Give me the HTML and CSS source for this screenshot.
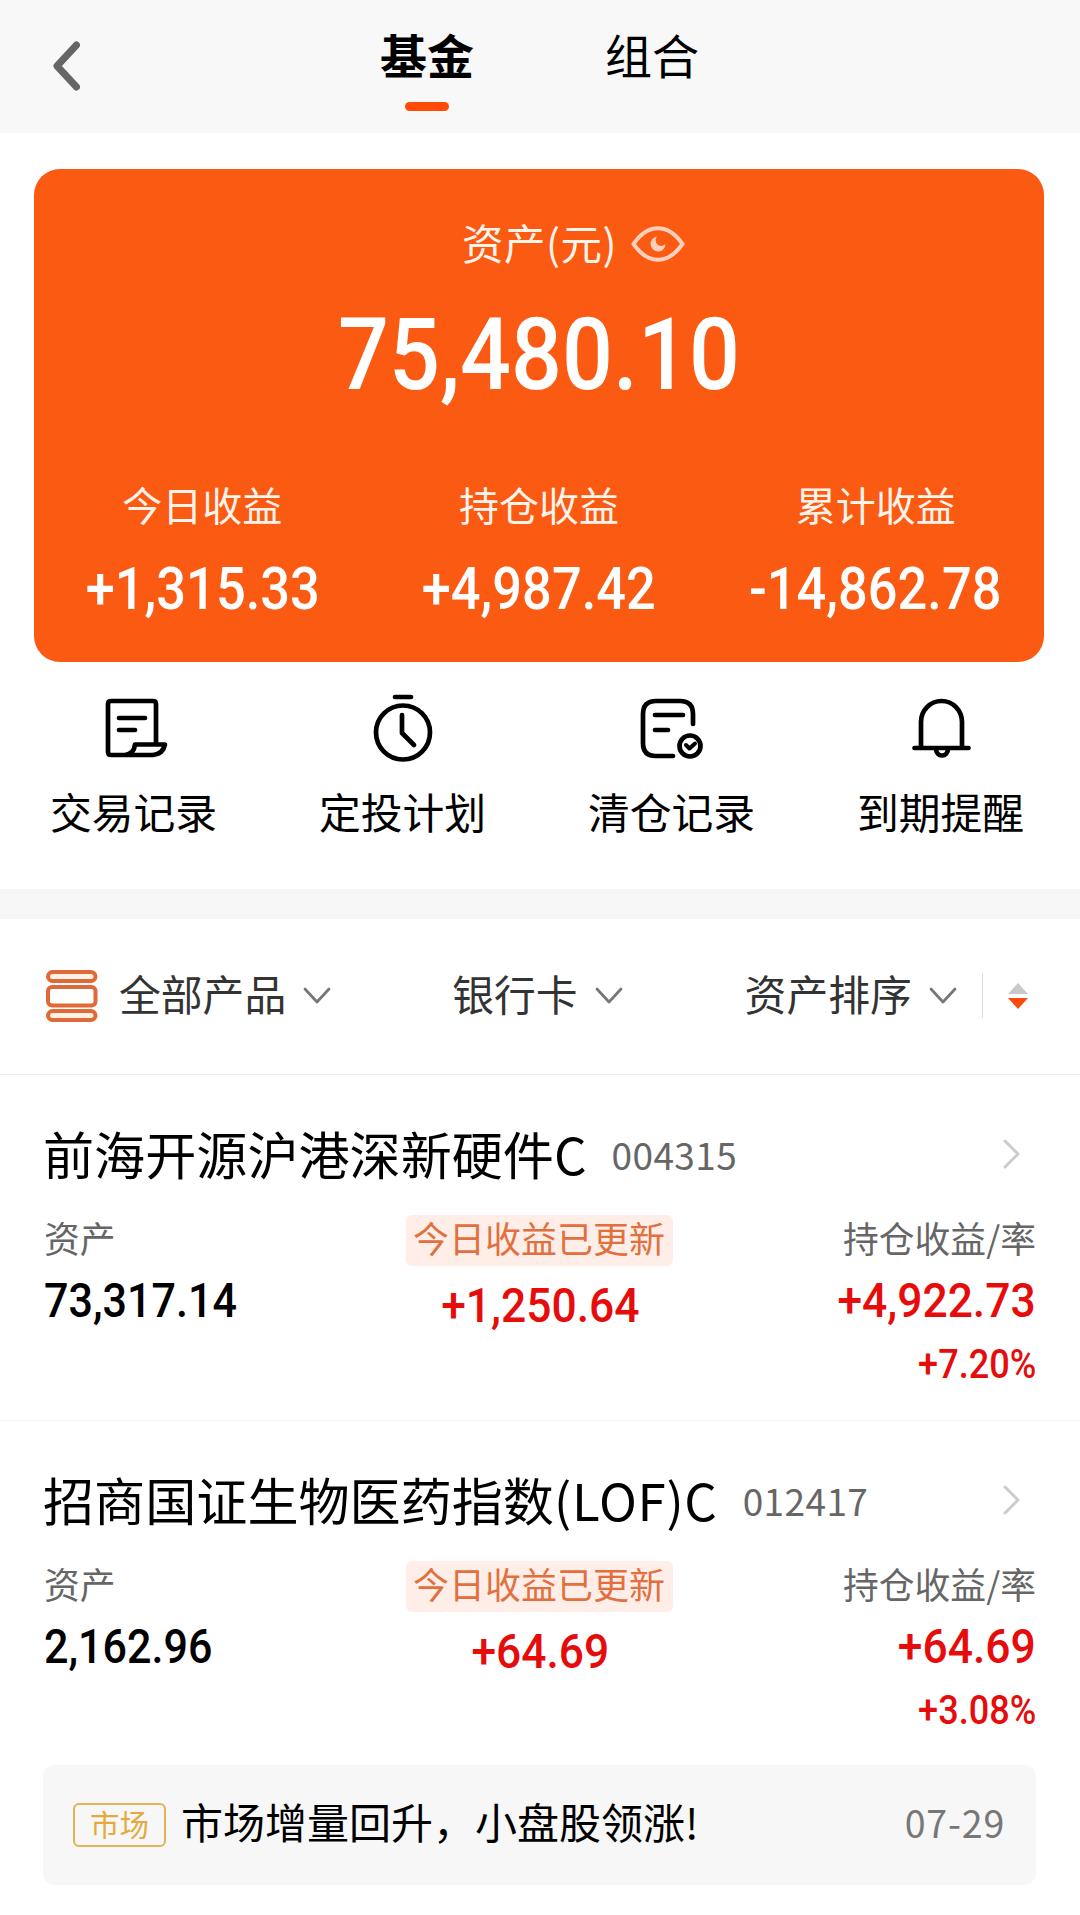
FILE: index.html
```
<!DOCTYPE html>
<html lang="zh-CN">
<head>
    <meta charset="UTF-8">
    <meta name="viewport" content="width=device-width, initial-scale=1.0">
    <title>基金</title>
    <link rel="stylesheet" href="styles.css">
</head>
<body>

    <header class="topo">
        <svg class="voltar" width="28" height="52" viewBox="0 0 28 52"><path d="M24.500 5 L5 26 L24.500 47"/></svg>
        <nav class="tabs">
            <a class="tab active">基金</a>
            <a class="tab">组合</a>
        </nav>
    </header>

    <section class="card">
        <div class="card-title">
            <span>资产(元)</span>
            <svg class="eye" width="54" height="38" viewBox="0 0 54 38">
                <path class="eye-line" d="M2.500 19 C17 -2 37 -2 51.500 19 C37 40 17 40 2.500 19 Z"/>
                <path class="eye-moon" d="M26 11.500 A7.500 7.500 0 1 0 34.500 19 A5 5 0 0 1 26 11.500 Z"/>
            </svg>
        </div>
        <div class="total num">75,480.10</div>
        <div class="stats">
            <div class="stat"><span>今日收益</span><b class="num">+1,315.33</b></div>
            <div class="stat"><span>持仓收益</span><b class="num">+4,987.42</b></div>
            <div class="stat"><span>累计收益</span><b class="num">-14,862.78</b></div>
        </div>
    </section>

    <nav class="actions">
        <a class="action">
            <svg width="70" height="70" viewBox="0 0 70 70">
                <path d="M57 48 V10 Q57 7 54 7 H12 Q9 7 9 10 V58 Q9 61 12 61 H54 Q64 60 66 50.500 H36 Q35 60 26 61"/>
                <path d="M20 24 H46 M20 36 H36"/>
            </svg>
            <span>交易记录</span>
        </a>
        <a class="action">
            <svg width="70" height="70" viewBox="0 0 70 70">
                <circle cx="35" cy="38.500" r="27"/>
                <path d="M27 3 H43 M34 21 V39 L46 51"/>
            </svg>
            <span>定投计划</span>
        </a>
        <a class="action">
            <svg width="70" height="70" viewBox="0 0 70 70">
                <path d="M56 30 V20 Q56 7 43 7 H19 Q6 7 6 20 V49 Q6 62 19 62 H36"/>
                <path d="M18 21 H46 M18 36 H31"/>
                <circle cx="53" cy="52" r="10.500"/>
                <path class="thin" d="M49 51 L52.500 54.500 L58 49.500"/>
            </svg>
            <span>清仓记录</span>
        </a>
        <a class="action">
            <svg width="70" height="70" viewBox="0 0 70 70">
                <path d="M15 53 V28 A20.500 21 0 0 1 56 28 V53"/>
                <path d="M8.500 54 H62.500 M30 55 A6 6.500 0 0 0 42 55"/>
            </svg>
            <span>到期提醒</span>
        </a>
    </nav>

    <div class="faixa"></div>

    <div class="filters">
        <svg class="list-icon" width="52" height="52" viewBox="0 0 52 52">
            <rect x="2" y="2" width="47.500" height="9" rx="4.500"/>
            <rect class="centro" x="2" y="17" width="47.500" height="18.500" rx="4"/>
            <rect x="2" y="41" width="47.500" height="9" rx="4.500"/>
        </svg>
        <span class="filter todos"><span>全部产品</span><svg class="seta" width="28" height="18" viewBox="0 0 28 18"><path d="M2 2 L14 15 L26 2"/></svg></span>
        <span class="filter banco"><span>银行卡</span><svg class="seta" width="28" height="18" viewBox="0 0 28 18"><path d="M2 2 L14 15 L26 2"/></svg></span>
        <span class="filter ordem"><span>资产排序</span><svg class="seta" width="28" height="18" viewBox="0 0 28 18"><path d="M2 2 L14 15 L26 2"/></svg></span>
        <i class="divisor"></i>
        <svg class="sort" width="20" height="26" viewBox="0 0 20 26">
            <path class="up" d="M10 0 L20 11 H0 Z"/>
            <path class="down" d="M0 15 H20 L10 26 Z"/>
        </svg>
    </div>

    <section class="fund">
        <div class="fund-head">
            <h2>前海开源沪港深新硬件C</h2>
            <span class="code">004315</span>
            <svg class="go" width="18" height="30" viewBox="0 0 18 30"><path d="M2 2 L15 15 L2 28"/></svg>
        </div>
        <div class="fund-body">
            <div class="col">
                <span class="label">资产</span>
                <b class="num">73,317.14</b>
            </div>
            <div class="col meio">
                <span class="badge">今日收益已更新</span>
                <b class="num red">+1,250.64</b>
            </div>
            <div class="col fim">
                <span class="label">持仓收益/率</span>
                <b class="num red">+4,922.73</b>
                <b class="num red rate">+7.20%</b>
            </div>
        </div>
    </section>

    <section class="fund">
        <div class="fund-head">
            <h2>招商国证生物医药指数<span class="latin">(LOF)C</span></h2>
            <span class="code">012417</span>
            <svg class="go" width="18" height="30" viewBox="0 0 18 30"><path d="M2 2 L15 15 L2 28"/></svg>
        </div>
        <div class="fund-body">
            <div class="col">
                <span class="label">资产</span>
                <b class="num">2,162.96</b>
            </div>
            <div class="col meio">
                <span class="badge">今日收益已更新</span>
                <b class="num red">+64.69</b>
            </div>
            <div class="col fim">
                <span class="label">持仓收益/率</span>
                <b class="num red">+64.69</b>
                <b class="num red rate">+3.08%</b>
            </div>
        </div>
    </section>

    <div class="notice">
        <span class="tag">市场</span>
        <span class="msg">市场增量回升，小盘股领涨!</span>
        <span class="date">07-29</span>
    </div>

</body>
</html>
```
FILE: styles.css
```
* {
    box-sizing: border-box;
}
body {
    margin: 0;
    width: 1080px;
    height: 1915px;
    overflow: hidden;
    background: #fff;
    color: #000;
    font-family: "Noto Sans CJK SC", sans-serif;
}
svg {
    display: block;
    flex: none;
    fill: none;
    stroke-linecap: round;
    stroke-linejoin: round;
}
h2, b {
    margin: 0;
    font-weight: 400;
}
span, b, h2 {
    white-space: nowrap;
}
/* Números mais estreitos */
.num {
    font-family: Roboto, sans-serif;
    font-weight: 500;
    transform: scaleX(0.888);
}

/* Topo */
.topo {
    display: flex;
    height: 133px;
    background: #f8f8f8;
}
.voltar {
    margin: 40px 0 0 52px;
    stroke: #666;
    stroke-width: 7;
}
.tabs {
    display: flex;
    gap: 131px;
    margin-left: 300px;
}
.tab {
    display: flex;
    flex-direction: column;
    align-items: center;
    width: 94px;
    padding-top: 19px;
    font-size: 47px;
    line-height: 70px;
}
.tab.active {
    font-weight: 700;
}
.tab.active::after {
    content: "";
    width: 44px;
    height: 9px;
    margin-top: 13px;
    border-radius: 5px;
    background: #ff4a08;
}

/* Card laranja */
.card {
    width: 1010px;
    height: 493px;
    margin: 36px 0 0 34px;
    padding-top: 43px;
    border-radius: 26px;
    background: #fb5a12;
    color: #fff;
}
.card-title {
    display: flex;
    align-items: center;
    height: 60px;
    padding-left: 428px;
    gap: 14px;
    font-size: 41.5px;
    line-height: 60px;
    letter-spacing: 0.5px;
    color: #fff3ea;
}
.eye {
    margin-top: 4px;
}
.eye-line {
    stroke: #ffcfbb;
    stroke-width: 4;
}
.eye-moon {
    fill: #ffcfbb;
}
.total {
    height: 120px;
    margin-top: 23px;
    text-align: center;
    font-size: 101px;
    line-height: 120px;
}
.stats {
    display: grid;
    grid-template-columns: repeat(3, 1fr);
    margin-top: 61px;
}
.stat {
    display: flex;
    flex-direction: column;
    align-items: center;
}
.stat span {
    font-size: 40px;
    line-height: 56px;
    color: #fff3ea;
}
.stat b {
    margin-top: 22px;
    font-size: 59px;
    line-height: 70px;
}

/* Atalhos */
.actions {
    display: grid;
    grid-template-columns: repeat(4, 269px);
    width: 1076px;
    height: 227px;
    margin-left: -1px;
    padding-top: 32px;
}
.action {
    display: flex;
    flex-direction: column;
    align-items: center;
    font-size: 41.8px;
    line-height: 60px;
}
.action svg {
    stroke: #000;
    stroke-width: 4.7;
}
.action .thin {
    stroke-width: 4;
}
.action span {
    margin-top: 17px;
}
.faixa {
    height: 30px;
    background: #f7f7f7;
}

/* Filtros */
.filters {
    display: flex;
    align-items: center;
    height: 156px;
    padding: 0 0 2px 46px;
    border-bottom: 1px solid #eaeaea;
    font-size: 41.8px;
    color: #333;
}
.list-icon {
    stroke: #e0693a;
    stroke-width: 4;
    fill: #fff0e4;
}
.centro {
    fill: #fff;
}
.filter {
    display: flex;
    align-items: center;
    gap: 17px;
    line-height: 60px;
}
.filter > span {
    margin-top: -5px;
}
.todos {
    margin-left: 21px;
}
.banco {
    margin-left: 121px;
}
.ordem {
    margin-left: 122px;
}
.seta {
    stroke: #777;
    stroke-width: 2.8;
}
.divisor {
    width: 1px;
    height: 45px;
    margin-left: 25px;
    background: #ddd;
}
.sort {
    margin-left: 25px;
}
.up {
    fill: #c9c9c9;
}
.down {
    fill: #fa4a0c;
}

/* Fundos */
.fund {
    height: 346px;
    padding: 43px 44px 0;
    border-bottom: 1px solid #f5f5f5;
}
.fund + .fund {
    height: 344px;
    border-bottom: none;
}
.fund-head {
    display: flex;
    align-items: center;
    height: 72px;
    margin-left: -1px;
}
.fund-head h2 {
    margin-top: -2px;
    font-size: 51.1px;
    line-height: 72px;
}
.latin {
    letter-spacing: 0.7px;
}
.code {
    margin-left: 25px;
    font-size: 37px;
    letter-spacing: 0.4px;
    color: #666;
}
.go {
    margin: 0 15px 0 auto;
    stroke: #ccc;
    stroke-width: 3;
}
.fund-body {
    display: grid;
    grid-template-columns: 1fr 1fr 1fr;
    padding-top: 25px;
}
.col {
    display: flex;
    flex-direction: column;
    align-items: flex-start;
}
.meio {
    align-items: center;
}
.fim {
    align-items: flex-end;
}
.label, .badge {
    height: 51px;
    font-size: 35.8px;
    line-height: 44px;
    color: #666;
}
.badge {
    width: 267px;
    padding-right: 2px;
    border-radius: 6px;
    background: #ffeee8;
    color: #e2703f;
    font-size: 36px;
    text-align: center;
}
.col .num {
    margin-top: 6px;
    font-size: 48.5px;
    line-height: 58px;
    transform-origin: left center;
}
.col .red {
    transform: scaleX(0.915);
}
.col.meio .num {
    margin-top: 11px;
    transform-origin: center;
}
.col.fim .num {
    transform-origin: right center;
}
.col .rate {
    margin-top: 5px;
    font-size: 41px;
    transform: scaleX(0.88);
}
.red {
    color: #e60c0c;
}

/* Aviso de mercado */
.notice {
    display: flex;
    align-items: center;
    width: 993px;
    height: 120px;
    margin-left: 43px;
    padding: 0 31px 0 30px;
    border-radius: 12px;
    background: #f7f7f7;
}
.tag {
    width: 93px;
    height: 44px;
    border: 2px solid #e3b252;
    border-radius: 6px;
    font-size: 29.5px;
    line-height: 37px;
    text-align: center;
    color: #e5a93c;
}
.msg {
    margin: -8px 0 0 15px;
    font-size: 42px;
    line-height: 60px;
}
.date {
    margin: -7px 0 0 auto;
    font-size: 37.5px;
    letter-spacing: 0.8px;
    color: #777;
}
```
